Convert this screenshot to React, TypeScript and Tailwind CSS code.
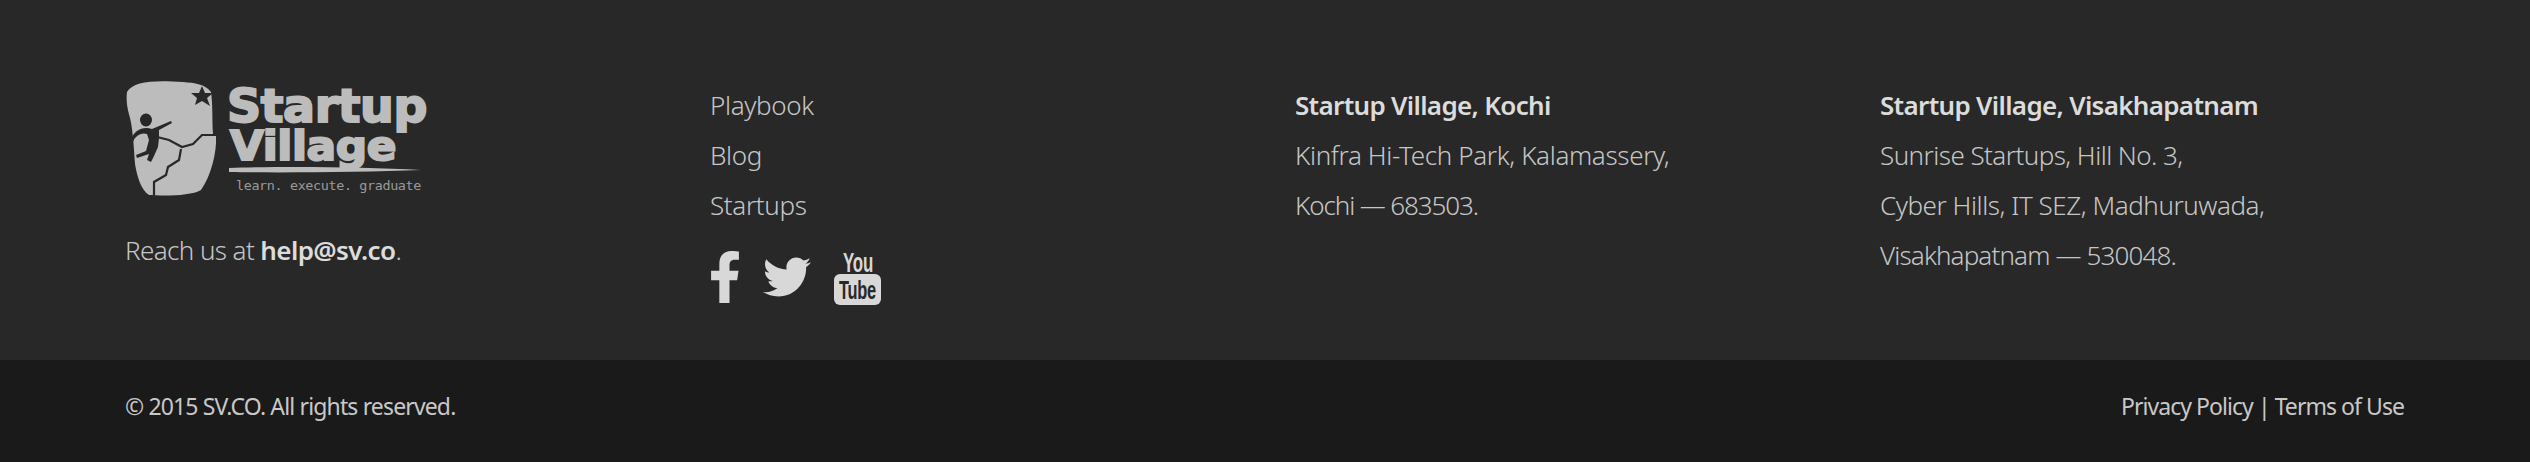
import { FaFacebookF, FaTwitter } from "react-icons/fa";

const fontStack = { fontFamily: '"Noto Sans", "Open Sans", sans-serif' };

function Logo() {
  return (
    <svg width="304" height="120" viewBox="0 0 304 120" className="block overflow-visible">
      {/* badge */}
      <path
        d="M2 12 C8 1 30 0 58 2 C70 3 80 4 86 12 C88 26 87 42 88 54 L91 56 C92 72 86 96 76 110 C66 116 40 116 24 115 C16 110 12 96 10 84 C9 70 8 50 5 38 C2 28 1 20 2 12 Z"
        fill="#bcbcbc"
      />
      {/* star */}
      <path d="M77 6 L80 13 L88 13 L82 18 L85 26 L77 21 L70 25 L72 18 L66 13 L74 13 Z" fill="#282828" />
      {/* cracks */}
      <path
        d="M32 57 L44 60 L57 67 L68 64 L77 55 L91 55 M56 69 L54 80 L43 87 L41 95 L29 102 L29 115"
        fill="none"
        stroke="#282828"
        strokeWidth="2.2"
      />
      {/* runner */}
      <ellipse cx="21" cy="40" rx="6" ry="6.5" fill="#282828" />
      <path
        d="M46 41 L47 43 L34 50 L34 58 L33 67 L29 76 L26 82 L22 80 L24 74 L12 78 L11 75 L21 71 L24 60 L22 54 C16 52 10 56 8 62 L6 60 C9 50 18 46 27 49 Z"
        fill="#282828"
      />
      <g fill="#bcbcbc" stroke="#bcbcbc" fontFamily='"DejaVu Sans", sans-serif' fontWeight="700">
        <text x="102" y="42" fontSize="46" strokeWidth="2" textLength="200" lengthAdjust="spacingAndGlyphs">
          Startup
        </text>
        <text x="105" y="80" fontSize="40" strokeWidth="2" textLength="166" lengthAdjust="spacingAndGlyphs">
          Village
        </text>
      </g>
      <path d="M104 88 C160 86 240 87 296 90 C240 92 160 93 104 92 Z" fill="#bcbcbc" />
      <text
        x="111"
        y="110"
        fontSize="13"
        fill="#9a9a9a"
        fontFamily='"DejaVu Sans Mono", monospace'
        textLength="185"
        lengthAdjust="spacingAndGlyphs"
      >
        learn. execute. graduate
      </text>
    </svg>
  );
}

function YoutubeIcon() {
  return (
    <svg width="48" height="56" viewBox="0 0 48 56" className="block overflow-visible">
      <text
        x="9"
        y="23"
        fontSize="27"
        fontWeight="700"
        fill="#d8d8d8"
        fontFamily='"Liberation Sans Narrow", "Liberation Sans", sans-serif'
        textLength="30"
        lengthAdjust="spacingAndGlyphs"
      >
        You
      </text>
      <rect x="0" y="25" width="47" height="31" rx="6" fill="#d8d8d8" />
      <text
        x="5"
        y="50"
        fontSize="26"
        fontWeight="700"
        fill="#282828"
        fontFamily='"Liberation Sans Narrow", "Liberation Sans", sans-serif'
        textLength="37"
        lengthAdjust="spacingAndGlyphs"
      >
        Tube
      </text>
    </svg>
  );
}

const links = ["Playbook", "Blog", "Startups"];

export default function App() {
  return (
    <footer className="w-[2530px] h-[462px] overflow-hidden" style={fontStack}>
      <div className="h-[360px] bg-[#282828] pl-[125px] pt-20 grid grid-cols-[585px_585px_585px_585px] text-[26px] leading-[50px] font-light tracking-[-0.35px] text-[#c6c6c6]">
        <div>
          <Logo />
          <p className="mt-[25px] tracking-[-0.6px]">
            Reach us at <b className="font-semibold text-[#dcdcdc]">help@sv.co</b>.
          </p>
        </div>
        <div>
          {links.map((link) => (
            <a key={link} className="block">
              {link}
            </a>
          ))}
          <div className="flex items-center mt-[-6px] pt-[25px] text-[#d8d8d8]">
            <FaFacebookF size={52} className="-ml-[7px] w-[44px]" />
            <FaTwitter size={48} className="ml-[16px]" />
            <div className="ml-[23px]">
              <YoutubeIcon />
            </div>
          </div>
        </div>
        <div>
          <p className="font-semibold tracking-[-0.68px] text-[#dcdcdc]">Startup Village, Kochi</p>
          <p>Kinfra Hi-Tech Park, Kalamassery,</p>
          <p className="tracking-[-1.1px]">Kochi — 683503.</p>
        </div>
        <div>
          <p className="font-semibold tracking-[-0.68px] text-[#dcdcdc]">Startup Village, Visakhapatnam</p>
          <p className="tracking-[-0.55px]">Sunrise Startups, Hill No. 3,</p>
          <p className="tracking-[-0.45px]">Cyber Hills, IT SEZ, Madhuruwada,</p>
          <p className="tracking-[-0.85px]">Visakhapatnam — 530048.</p>
        </div>
      </div>
      <div className="h-[102px] bg-[#1a1a1a] pl-[125px] pr-[126px] pt-[31px] flex justify-between text-[23px] leading-[30px] text-[#c8c8c8]">
        <span className="tracking-[-0.85px]">© 2015 SV.CO. All rights reserved.</span>
        <span className="tracking-[-0.95px]">Privacy Policy | Terms of Use</span>
      </div>
    </footer>
  );
}
